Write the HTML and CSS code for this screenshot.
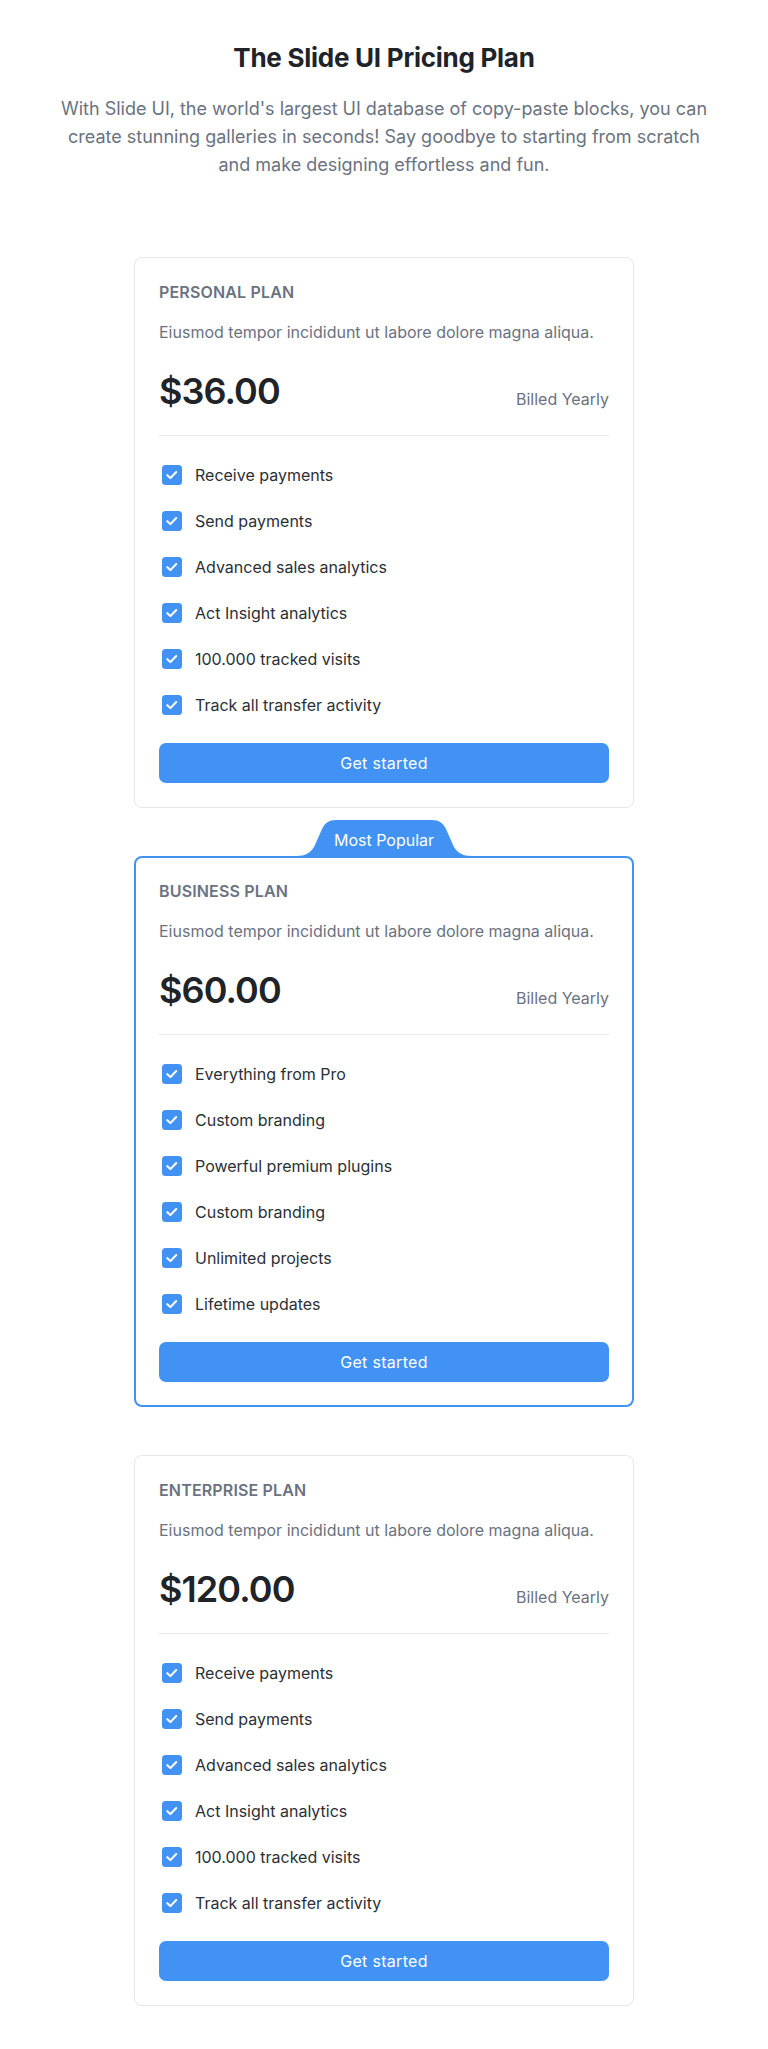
FILE: index.html
```html
<!DOCTYPE html>
<html lang="en">
<head>
<meta charset="utf-8">
<title>The Slide UI Pricing Plan</title>
<link rel="stylesheet" href="styles.css">
</head>
<body>
<main class="page">
  <header class="hero">
    <h1 class="hero-title">The Slide UI Pricing Plan</h1>
    <p class="hero-text">With Slide UI, the world's largest UI database of copy-paste blocks, you can create stunning galleries in seconds! Say goodbye to starting from scratch and make designing effortless and fun.</p>
  </header>

  <section class="plans">
    <article class="card">
      <h2 class="plan-name">Personal Plan</h2>
      <p class="plan-desc">Eiusmod tempor incididunt ut labore dolore magna aliqua.</p>
      <div class="price-row">
        <span class="price">$36.00</span>
        <span class="billing">Billed Yearly</span>
      </div>
      <ul class="features">
        <li class="feature"><span class="check"><svg viewBox="0 0 20 20" width="20" height="20"><rect width="20" height="20" rx="3.5" fill="#4192f3"/><path d="M5.3 10.2 L8.4 13.1 L14.2 7" fill="none" stroke="#fff" stroke-width="2.1" stroke-linecap="round" stroke-linejoin="round"/></svg></span>Receive payments</li>
        <li class="feature"><span class="check"><svg viewBox="0 0 20 20" width="20" height="20"><rect width="20" height="20" rx="3.5" fill="#4192f3"/><path d="M5.3 10.2 L8.4 13.1 L14.2 7" fill="none" stroke="#fff" stroke-width="2.1" stroke-linecap="round" stroke-linejoin="round"/></svg></span>Send payments</li>
        <li class="feature"><span class="check"><svg viewBox="0 0 20 20" width="20" height="20"><rect width="20" height="20" rx="3.5" fill="#4192f3"/><path d="M5.3 10.2 L8.4 13.1 L14.2 7" fill="none" stroke="#fff" stroke-width="2.1" stroke-linecap="round" stroke-linejoin="round"/></svg></span>Advanced sales analytics</li>
        <li class="feature"><span class="check"><svg viewBox="0 0 20 20" width="20" height="20"><rect width="20" height="20" rx="3.5" fill="#4192f3"/><path d="M5.3 10.2 L8.4 13.1 L14.2 7" fill="none" stroke="#fff" stroke-width="2.1" stroke-linecap="round" stroke-linejoin="round"/></svg></span>Act Insight analytics</li>
        <li class="feature"><span class="check"><svg viewBox="0 0 20 20" width="20" height="20"><rect width="20" height="20" rx="3.5" fill="#4192f3"/><path d="M5.3 10.2 L8.4 13.1 L14.2 7" fill="none" stroke="#fff" stroke-width="2.1" stroke-linecap="round" stroke-linejoin="round"/></svg></span>100.000 tracked visits</li>
        <li class="feature"><span class="check"><svg viewBox="0 0 20 20" width="20" height="20"><rect width="20" height="20" rx="3.5" fill="#4192f3"/><path d="M5.3 10.2 L8.4 13.1 L14.2 7" fill="none" stroke="#fff" stroke-width="2.1" stroke-linecap="round" stroke-linejoin="round"/></svg></span>Track all transfer activity</li>
      </ul>
      <button class="cta" type="button">Get started</button>
    </article>

    <article class="card card-popular">
      <div class="badge">
        <svg class="badge-shape" viewBox="0 0 176 38" width="176" height="38" preserveAspectRatio="none"><path d="M0 36 C12 36 16 31 19 25 L26 9 C29 3 33 0 40 0 L136 0 C143 0 147 3 150 9 L157 25 C160 31 164 36 176 36 L176 38 L0 38 Z" fill="#4192f3"/></svg>
        <span class="badge-text">Most Popular</span>
      </div>
      <h2 class="plan-name">Business Plan</h2>
      <p class="plan-desc">Eiusmod tempor incididunt ut labore dolore magna aliqua.</p>
      <div class="price-row">
        <span class="price">$60.00</span>
        <span class="billing">Billed Yearly</span>
      </div>
      <ul class="features">
        <li class="feature"><span class="check"><svg viewBox="0 0 20 20" width="20" height="20"><rect width="20" height="20" rx="3.5" fill="#4192f3"/><path d="M5.3 10.2 L8.4 13.1 L14.2 7" fill="none" stroke="#fff" stroke-width="2.1" stroke-linecap="round" stroke-linejoin="round"/></svg></span>Everything from Pro</li>
        <li class="feature"><span class="check"><svg viewBox="0 0 20 20" width="20" height="20"><rect width="20" height="20" rx="3.5" fill="#4192f3"/><path d="M5.3 10.2 L8.4 13.1 L14.2 7" fill="none" stroke="#fff" stroke-width="2.1" stroke-linecap="round" stroke-linejoin="round"/></svg></span>Custom branding</li>
        <li class="feature"><span class="check"><svg viewBox="0 0 20 20" width="20" height="20"><rect width="20" height="20" rx="3.5" fill="#4192f3"/><path d="M5.3 10.2 L8.4 13.1 L14.2 7" fill="none" stroke="#fff" stroke-width="2.1" stroke-linecap="round" stroke-linejoin="round"/></svg></span>Powerful premium plugins</li>
        <li class="feature"><span class="check"><svg viewBox="0 0 20 20" width="20" height="20"><rect width="20" height="20" rx="3.5" fill="#4192f3"/><path d="M5.3 10.2 L8.4 13.1 L14.2 7" fill="none" stroke="#fff" stroke-width="2.1" stroke-linecap="round" stroke-linejoin="round"/></svg></span>Custom branding</li>
        <li class="feature"><span class="check"><svg viewBox="0 0 20 20" width="20" height="20"><rect width="20" height="20" rx="3.5" fill="#4192f3"/><path d="M5.3 10.2 L8.4 13.1 L14.2 7" fill="none" stroke="#fff" stroke-width="2.1" stroke-linecap="round" stroke-linejoin="round"/></svg></span>Unlimited projects</li>
        <li class="feature"><span class="check"><svg viewBox="0 0 20 20" width="20" height="20"><rect width="20" height="20" rx="3.5" fill="#4192f3"/><path d="M5.3 10.2 L8.4 13.1 L14.2 7" fill="none" stroke="#fff" stroke-width="2.1" stroke-linecap="round" stroke-linejoin="round"/></svg></span>Lifetime updates</li>
      </ul>
      <button class="cta" type="button">Get started</button>
    </article>

    <article class="card">
      <h2 class="plan-name">Enterprise Plan</h2>
      <p class="plan-desc">Eiusmod tempor incididunt ut labore dolore magna aliqua.</p>
      <div class="price-row">
        <span class="price">$120.00</span>
        <span class="billing">Billed Yearly</span>
      </div>
      <ul class="features">
        <li class="feature"><span class="check"><svg viewBox="0 0 20 20" width="20" height="20"><rect width="20" height="20" rx="3.5" fill="#4192f3"/><path d="M5.3 10.2 L8.4 13.1 L14.2 7" fill="none" stroke="#fff" stroke-width="2.1" stroke-linecap="round" stroke-linejoin="round"/></svg></span>Receive payments</li>
        <li class="feature"><span class="check"><svg viewBox="0 0 20 20" width="20" height="20"><rect width="20" height="20" rx="3.5" fill="#4192f3"/><path d="M5.3 10.2 L8.4 13.1 L14.2 7" fill="none" stroke="#fff" stroke-width="2.1" stroke-linecap="round" stroke-linejoin="round"/></svg></span>Send payments</li>
        <li class="feature"><span class="check"><svg viewBox="0 0 20 20" width="20" height="20"><rect width="20" height="20" rx="3.5" fill="#4192f3"/><path d="M5.3 10.2 L8.4 13.1 L14.2 7" fill="none" stroke="#fff" stroke-width="2.1" stroke-linecap="round" stroke-linejoin="round"/></svg></span>Advanced sales analytics</li>
        <li class="feature"><span class="check"><svg viewBox="0 0 20 20" width="20" height="20"><rect width="20" height="20" rx="3.5" fill="#4192f3"/><path d="M5.3 10.2 L8.4 13.1 L14.2 7" fill="none" stroke="#fff" stroke-width="2.1" stroke-linecap="round" stroke-linejoin="round"/></svg></span>Act Insight analytics</li>
        <li class="feature"><span class="check"><svg viewBox="0 0 20 20" width="20" height="20"><rect width="20" height="20" rx="3.5" fill="#4192f3"/><path d="M5.3 10.2 L8.4 13.1 L14.2 7" fill="none" stroke="#fff" stroke-width="2.1" stroke-linecap="round" stroke-linejoin="round"/></svg></span>100.000 tracked visits</li>
        <li class="feature"><span class="check"><svg viewBox="0 0 20 20" width="20" height="20"><rect width="20" height="20" rx="3.5" fill="#4192f3"/><path d="M5.3 10.2 L8.4 13.1 L14.2 7" fill="none" stroke="#fff" stroke-width="2.1" stroke-linecap="round" stroke-linejoin="round"/></svg></span>Track all transfer activity</li>
      </ul>
      <button class="cta" type="button">Get started</button>
    </article>
  </section>
</main>
</body>
</html>
```

FILE: styles.css
```css
* {
  box-sizing: border-box;
}

html, body {
  margin: 0;
  padding: 0;
  background: #ffffff;
}

body {
  font-family: Inter, "Noto Sans", "Liberation Sans", sans-serif;
  color: #24292f;
}

.page {
  padding: 42px 0 41px;
}

.hero {
  max-width: 660px;
  margin: 0 auto;
  text-align: center;
}

.hero-title {
  margin: 0;
  font-size: 26px;
  line-height: 32px;
  font-weight: 650;
  letter-spacing: -0.01em;
  color: #202327;
}

.hero-text {
  margin: 21px 0 0;
  font-size: 18px;
  line-height: 28px;
  color: #6b7280;
}

.plans {
  width: 500px;
  margin: 78px auto 0;
  display: flex;
  flex-direction: column;
  gap: 48px;
}

.card {
  position: relative;
  background: #ffffff;
  border: 1px solid #e6e7ea;
  border-radius: 8px;
  padding: 24px;
}

.card-popular {
  border: 2px solid #4192f3;
  padding: 23px;
}

.badge {
  position: absolute;
  top: -38px;
  left: 50%;
  transform: translateX(-50%);
  width: 176px;
  height: 38px;
  display: flex;
  justify-content: center;
  padding-top: 8px;
}

.badge-shape {
  position: absolute;
  inset: 0;
  display: block;
}

.badge-text {
  position: relative;
  font-size: 16px;
  line-height: 24px;
  color: #ffffff;
}

.plan-name {
  margin: 0;
  font-size: 16px;
  line-height: 20px;
  font-weight: 600;
  text-transform: uppercase;
  color: #6b7280;
  letter-spacing: 0.01em;
}

.plan-desc {
  margin: 18px 0 0;
  font-size: 16px;
  line-height: 24px;
  color: #6b7280;
}

.price-row {
  margin-top: 27px;
  padding-bottom: 24px;
  border-bottom: 1px solid #e9eaec;
  display: flex;
  justify-content: space-between;
  align-items: flex-end;
}

.price {
  font-size: 36px;
  line-height: 40px;
  font-weight: 600;
  letter-spacing: -0.025em;
  color: #202327;
}

.billing {
  font-size: 16px;
  line-height: 24px;
  color: #6b7280;
}

.features {
  list-style: none;
  margin: 27px 0 0;
  padding: 0;
  display: flex;
  flex-direction: column;
  gap: 22px;
}

.feature {
  display: flex;
  align-items: center;
  font-size: 16px;
  line-height: 24px;
  color: #2b3036;
}

.check {
  display: flex;
  width: 20px;
  height: 20px;
  margin-left: 3px;
  margin-right: 13px;
  flex-shrink: 0;
}

.cta {
  display: block;
  width: 100%;
  height: 40px;
  margin-top: 26px;
  border: 0;
  border-radius: 7px;
  background: #4192f3;
  color: #ffffff;
  font-family: inherit;
  font-size: 16px;
  line-height: 24px;
  letter-spacing: 0.02em;
  cursor: pointer;
}
```
